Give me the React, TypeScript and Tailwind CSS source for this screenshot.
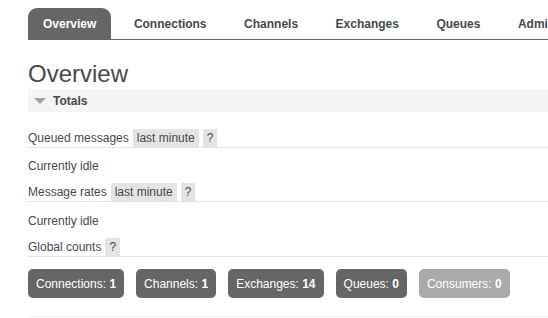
import { ReactNode } from "react";

const tabs = ["Overview", "Connections", "Channels", "Exchanges", "Queues", "Admin"];

const counts = [
  { label: "Connections", value: 1 },
  { label: "Channels", value: 1 },
  { label: "Exchanges", value: 14 },
  { label: "Queues", value: 0 },
  { label: "Consumers", value: 0, dim: true },
];

const Badge = ({ children }: { children: ReactNode }) => (
  <span className="bg-[#e4e4e4] px-[4px] h-[18px] leading-[18px] inline-block">
    {children}
  </span>
);

const SubHeading = ({ title, range }: { title: string; range?: boolean }) => (
  <div className="flex items-center gap-[4px] h-[19px] border-b border-[#e4e4e4]">
    <span>{title}</span>
    {range && <Badge>last minute</Badge>}
    <Badge>?</Badge>
  </div>
);

export default function App() {
  return (
    <div
      className="w-[548px] h-[318px] overflow-hidden bg-white text-[#484848] text-[12px]"
      style={{ fontFamily: '"Liberation Sans", Arial, sans-serif' }}
    >
      <div className="pl-7 w-[700px]">
        {/* top menu */}
        <ul className="flex gap-[7.5px] mt-2 border-b border-[#666] whitespace-nowrap">
          {tabs.map((t, i) => (
            <li
              key={t}
              className={`h-[31px] px-[15px] flex items-center pt-[1px] font-bold ${
                i === 0 ? "bg-[#666] text-white rounded-t-[9px]" : "text-[#484848]"
              }`}
            >
              {t}
            </li>
          ))}
        </ul>

        <h1 className="text-[24px] leading-[28px] mt-[20px]">Overview</h1>

        <div className="bg-[#f5f5f5] h-[23px] flex items-center mt-[1px]">
          <svg width="12" height="6" viewBox="0 0 12 6" className="ml-[6px] mt-[1px]">
            <polygon points="0,0 12,0 6,6" fill="#a3a3a3" />
          </svg>
          <span className="font-bold ml-[7px]">Totals</span>
        </div>

        <div className="mt-[17px]">
          <SubHeading title="Queued messages" range />
          <p className="leading-[15px] pt-[11px] pb-[9px]">Currently idle</p>
          <SubHeading title="Message rates" range />
          <p className="leading-[15px] pt-[12px] pb-[9px]">Currently idle</p>
          <SubHeading title="Global counts" />
        </div>

        <div className="flex gap-[12px] mt-[12px]">
          {counts.map((c) => (
            <div
              key={c.label}
              className={`h-[29px] px-2 flex items-center rounded-[5px] text-white ${
                c.dim ? "bg-[#aaa]" : "bg-[#666]"
              }`}
            >
              {c.label}:&nbsp;<b>{c.value}</b>
            </div>
          ))}
        </div>

        <div className="mt-[18px] border-b border-[#eee]" />
      </div>
    </div>
  );
}
